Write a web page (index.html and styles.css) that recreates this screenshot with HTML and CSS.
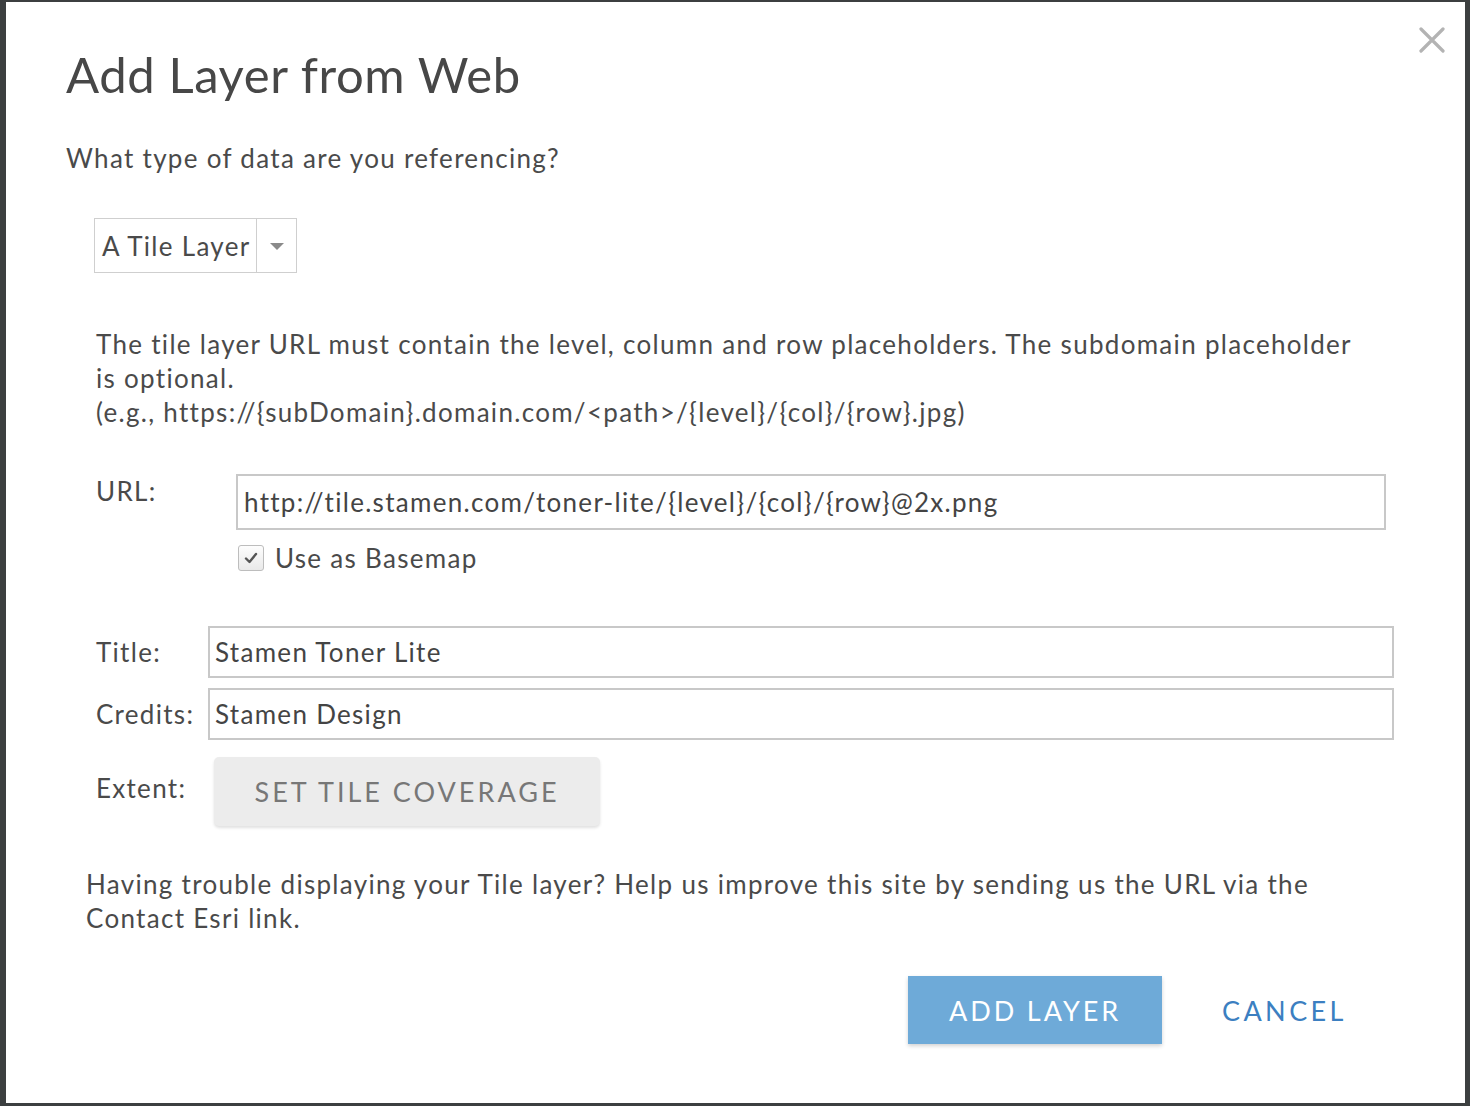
FILE: index.html
```html
<!DOCTYPE html>
<html>
<head>
<meta charset="utf-8">
<link rel="stylesheet" href="styles.css">
</head>
<body>
<div class="dialog">
  <button class="close" aria-label="Close">
    <svg width="26" height="26" viewBox="0 0 26 26"><path d="M2 2 L24 24 M24 2 L2 24" stroke="#b3b3b3" stroke-width="3.2" stroke-linecap="round"/></svg>
  </button>
  <h1 class="title">Add Layer from Web</h1>
  <p class="question">What type of data are you referencing?</p>
  <div class="select">
    <span class="select-value">A Tile Layer</span>
    <span class="select-arrow"><svg width="14" height="8" viewBox="0 0 14 8"><path d="M0 0 L14 0 L7 7 Z" fill="#8a8a8a"/></svg></span>
  </div>
  <p class="help">The tile layer URL must contain the level, column and row placeholders. The subdomain placeholder is optional.<br>(e.g., https://{subDomain}.domain.com/&lt;path&gt;/{level}/{col}/{row}.jpg)</p>
  <div class="url-row">
    <label class="label url-label">URL:</label>
    <div class="url-col">
      <div class="input url-input">http://tile.stamen.com/toner-lite/{level}/{col}/{row}@2x.png</div>
      <div class="check-row">
        <span class="checkbox"><svg width="16" height="14" viewBox="0 0 16 14"><path d="M3 7.5 L6.5 11 L13 3" fill="none" stroke="#555" stroke-width="2.4" stroke-linecap="round" stroke-linejoin="round"/></svg></span>
        <span class="check-label">Use as Basemap</span>
      </div>
    </div>
  </div>
  <div class="fields">
    <label class="label">Title:</label>
    <div class="input field-input">Stamen Toner Lite</div>
    <label class="label">Credits:</label>
    <div class="input field-input">Stamen Design</div>
    <label class="label">Extent:</label>
    <div><button class="coverage">SET TILE COVERAGE</button></div>
  </div>
  <p class="trouble">Having trouble displaying your Tile layer? Help us improve this site by sending us the URL via the Contact Esri link.</p>
  <div class="actions">
    <button class="primary">ADD LAYER</button>
    <button class="link">CANCEL</button>
  </div>
</div>
</body>
</html>
```
FILE: styles.css
```css
html, body {
  margin: 0;
  padding: 0;
}
body {
  background: #3c3f40;
  width: 1470px;
  height: 1106px;
  overflow: hidden;
  font-family: "Lato", "Noto Sans", sans-serif;
  color: #4a4a4a;
  letter-spacing: 1.3px;
}
.dialog {
  position: relative;
  box-sizing: border-box;
  margin: 2px 0 0 6px;
  width: 1459px;
  height: 1101px;
  background: #fff;
  padding: 40px 0 0 60px;
}
.close {
  position: absolute;
  top: 25px;
  right: 20px;
  border: 0;
  background: none;
  padding: 0;
  cursor: pointer;
}
.title {
  margin: 0;
  font-weight: 400;
  font-size: 49px;
  line-height: 64px;
  letter-spacing: 0.6px;
  color: #474747;
}
.question {
  margin: 34px 0 0;
  font-size: 26px;
  line-height: 36px;
}
.select {
  display: flex;
  margin: 42px 0 0 28px;
  width: 203px;
  height: 55px;
  box-sizing: border-box;
  border: 1px solid #cfcfcf;
}
.select-value {
  flex: 1;
  display: flex;
  align-items: center;
  padding-left: 7px;
  font-size: 26px;
  border-right: 1px solid #cfcfcf;
}
.select-arrow {
  width: 39px;
  display: flex;
  align-items: center;
  justify-content: center;
  padding-top: 2px;
}
.help {
  margin: 54px 0 0 30px;
  max-width: 1262px;
  font-size: 26px;
  line-height: 34px;
}
.label {
  font-size: 26px;
  line-height: 34px;
}
.url-row {
  display: flex;
  margin: 45px 0 0 30px;
}
.url-label {
  width: 140px;
}
.input {
  box-sizing: border-box;
  border: 2px solid #c8c8c8;
  font-size: 26px;
  display: flex;
  align-items: center;
  color: #444;
}
.url-input {
  width: 1150px;
  height: 56px;
  padding-left: 6px;
}
.check-row {
  display: flex;
  align-items: center;
  margin-top: 12px;
  margin-left: 2px;
  gap: 11px;
}
.checkbox {
  width: 26px;
  height: 26px;
  box-sizing: border-box;
  border: 1px solid #bdbdbd;
  border-radius: 3px;
  background: linear-gradient(#fdfdfd, #e9e9e9);
  display: flex;
  align-items: center;
  justify-content: center;
}
.check-label {
  font-size: 26px;
}
.fields {
  display: grid;
  grid-template-columns: 112px 1186px;
  row-gap: 10px;
  margin: 52px 0 0 30px;
  align-items: center;
}
.field-input {
  height: 52px;
  padding-left: 5px;
}
.coverage {
  margin: 7px 0 0 6px;
  width: 386px;
  height: 69px;
  border: 0;
  border-radius: 5px;
  background: #ececec;
  box-shadow: 0 2px 3px rgba(0,0,0,0.12);
  font-family: inherit;
  font-size: 27px;
  letter-spacing: 3px;
  color: #777;
}
.trouble {
  margin: 41px 0 0 20px;
  max-width: 1250px;
  font-size: 26px;
  line-height: 34px;
}
.actions {
  display: flex;
  align-items: center;
  margin: 41px 0 0 842px;
}
.primary {
  width: 254px;
  height: 68px;
  border: 0;
  background: #6eaad8;
  color: #fff;
  font-family: inherit;
  font-size: 27px;
  letter-spacing: 2.9px;
  box-shadow: 0 2px 4px rgba(0,0,0,0.18);
}
.link {
  margin-left: 60px;
  border: 0;
  background: none;
  padding: 0;
  color: #3c7fc1;
  font-family: inherit;
  font-size: 27px;
  letter-spacing: 3.4px;
}
```
